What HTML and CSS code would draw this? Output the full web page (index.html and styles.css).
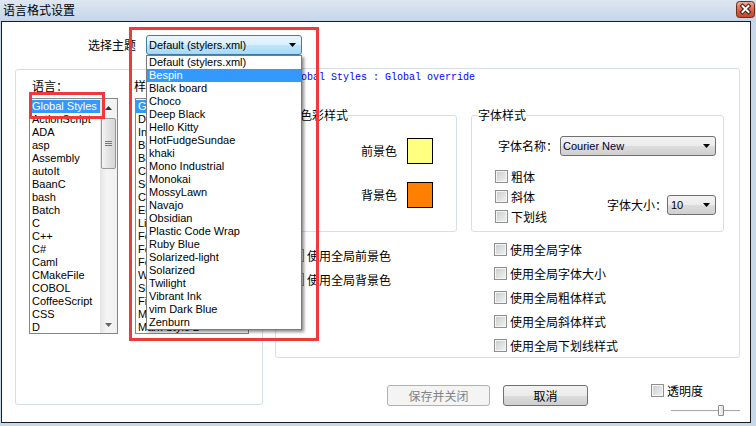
FILE: index.html
```html
<!DOCTYPE html>
<html lang="zh-CN">
<head>
    <meta charset="UTF-8">
    <title>语言格式设置</title>
    <link rel="stylesheet" href="styles.css">
</head>
<body>
    <div class="titlebar">
        <span class="title zh">语言格式设置</span>
        <svg class="close" width="19" height="17" viewBox="0 0 19 17">
            <defs>
                <linearGradient id="cg" x1="0" y1="0" x2="0" y2="1">
                    <stop offset="0" stop-color="#eab19f"/>
                    <stop offset="0.5" stop-color="#d7694c"/>
                    <stop offset="1" stop-color="#c2452a"/>
                </linearGradient>
            </defs>
            <rect x="0.5" y="0.5" width="18" height="16" rx="3" fill="url(#cg)" stroke="#6e2a1a"/>
            <path d="M6.5 5 L12.5 11 M12.5 5 L6.5 11" stroke="#3d1710" stroke-width="4" stroke-linecap="square"/>
            <path d="M6.5 5 L12.5 11 M12.5 5 L6.5 11" stroke="#fff" stroke-width="2" stroke-linecap="square"/>
        </svg>
    </div>

    <div class="window">
        <div class="theme-row">
            <span class="theme-label zh">选择主题</span>
            <div class="combo combo-focus theme-combo">
                <span>Default (stylers.xml)</span>
                <svg class="arrow" width="7" height="4"><path d="M0 0 L7 0 L3.5 4Z" fill="#000"/></svg>
                <ul class="dropdown">
                    <li>Default (stylers.xml)</li>
                    <li class="sel">Bespin</li>
                    <li>Black board</li>
                    <li>Choco</li>
                    <li>Deep Black</li>
                    <li>Hello Kitty</li>
                    <li>HotFudgeSundae</li>
                    <li>khaki</li>
                    <li>Mono Industrial</li>
                    <li>Monokai</li>
                    <li>MossyLawn</li>
                    <li>Navajo</li>
                    <li>Obsidian</li>
                    <li>Plastic Code Wrap</li>
                    <li>Ruby Blue</li>
                    <li>Solarized-light</li>
                    <li>Solarized</li>
                    <li>Twilight</li>
                    <li>Vibrant Ink</li>
                    <li>vim Dark Blue</li>
                    <li>Zenburn</li>
                </ul>
            </div>
        </div>

        <div class="main">
            <div class="group left-group">
                <div class="col">
                    <div class="lbl zh">语言：</div>
                    <div class="listbox lang-list">
                        <ul class="items">
                            <li class="sel">Global Styles</li>
                            <li>ActionScript</li>
                            <li>ADA</li>
                            <li>asp</li>
                            <li>Assembly</li>
                            <li>autoIt</li>
                            <li>BaanC</li>
                            <li>bash</li>
                            <li>Batch</li>
                            <li>C</li>
                            <li>C++</li>
                            <li>C#</li>
                            <li>Caml</li>
                            <li>CMakeFile</li>
                            <li>COBOL</li>
                            <li>CoffeeScript</li>
                            <li>CSS</li>
                            <li>D</li>
                        </ul>
                        <div class="vscroll">
                            <div class="sb-btn"><svg width="7" height="4"><path d="M0 4 L3.5 0 L7 4Z" fill="#333"/></svg></div>
                            <div class="sb-thumb">
                                <svg width="7" height="7"><path d="M0 1.5 H7 M0 3.5 H7 M0 5.5 H7" stroke="#777" stroke-width="1"/></svg>
                            </div>
                            <div class="sb-track"></div>
                            <div class="sb-btn"><svg width="7" height="4"><path d="M0 0 L7 0 L3.5 4Z" fill="#666"/></svg></div>
                        </div>
                    </div>
                </div>
                <div class="col">
                    <div class="lbl lbl-style zh">样式：</div>
                    <div class="listbox style-list">
                        <ul class="items">
                            <li class="sel">Global override</li>
                            <li>Default Style</li>
                            <li>Indent guideline style</li>
                            <li>Brace highlight style</li>
                            <li>Bad brace colour</li>
                            <li>Current line background colour</li>
                            <li>Selected text colour</li>
                            <li>Caret colour</li>
                            <li>Edge colour</li>
                            <li>Line number margin</li>
                            <li>Fold</li>
                            <li>Fold active</li>
                            <li>Fold margin</li>
                            <li>White space symbol</li>
                            <li>Smart HighLighting</li>
                            <li>Find Mark Style</li>
                            <li>Mark Style 1</li>
                            <li>Mark Style 2</li>
                        </ul>
                    </div>
                </div>
            </div>

            <div class="right-col">
                <div class="group right-group">
                    <div class="desc">Global Styles : Global override</div>

                    <div class="subgroups">
                        <fieldset class="colour-group">
                            <legend class="zh">色彩样式</legend>
                            <div class="colour-inner">
                                <span class="zh">前景色</span>
                                <span class="swatch fg"></span>
                                <span class="zh">背景色</span>
                                <span class="swatch bg"></span>
                            </div>
                        </fieldset>
                        <fieldset class="font-group">
                            <legend class="zh">字体样式</legend>
                            <div class="font-inner">
                                <div class="name-row">
                                    <span class="zh font-lbl">字体名称：</span>
                                    <div class="combo name-combo">
                                        <span>Courier New</span>
                                        <svg class="arrow" width="7" height="4"><path d="M0 0 L7 0 L3.5 4Z" fill="#000"/></svg>
                                    </div>
                                </div>
                                <div class="style-row">
                                    <div class="font-chks">
                                        <label class="chk"><span class="box"></span><span class="zh">粗体</span></label>
                                        <label class="chk"><span class="box"></span><span class="zh">斜体</span></label>
                                        <label class="chk"><span class="box"></span><span class="zh">下划线</span></label>
                                    </div>
                                    <div class="size">
                                        <span class="zh font-lbl">字体大小：</span>
                                        <div class="combo size-combo">
                                            <span>10</span>
                                            <svg class="arrow" width="7" height="4"><path d="M0 0 L7 0 L3.5 4Z" fill="#000"/></svg>
                                        </div>
                                    </div>
                                </div>
                            </div>
                        </fieldset>
                    </div>

                    <div class="globals">
                        <div class="gcol gcol-left">
                            <label class="chk"><span class="box"></span><span class="zh">使用全局前景色</span></label>
                            <label class="chk"><span class="box"></span><span class="zh">使用全局背景色</span></label>
                        </div>
                        <div class="gcol">
                            <label class="chk"><span class="box"></span><span class="zh">使用全局字体</span></label>
                            <label class="chk"><span class="box"></span><span class="zh">使用全局字体大小</span></label>
                            <label class="chk"><span class="box"></span><span class="zh">使用全局粗体样式</span></label>
                            <label class="chk"><span class="box"></span><span class="zh">使用全局斜体样式</span></label>
                            <label class="chk"><span class="box"></span><span class="zh">使用全局下划线样式</span></label>
                        </div>
                    </div>
                </div>

                <div class="bottom">
                    <button class="btn btn-save zh" disabled>保存并关闭</button>
                    <button class="btn btn-cancel zh">取消</button>
                    <div class="trans">
                        <label class="chk"><span class="box"></span><span class="zh">透明度</span></label>
                        <div class="slider"><span class="thumb"></span></div>
                    </div>
                </div>
            </div>
        </div>

        <!-- annotation boxes drawn over the dialog -->
        <div class="mark mark-theme"></div>
        <div class="mark mark-lang"></div>
    </div>
</body>
</html>
```

FILE: styles.css
```css
* { box-sizing: border-box; }
body { margin: 0; width: 756px; height: 426px; overflow: hidden; background: #c8d7ea; font-family: "Liberation Sans", "Noto Sans CJK SC", sans-serif; font-size: 11px; color: #000; }
ul { list-style: none; margin: 0; padding: 0; }
.zh { font-family: "Noto Sans CJK SC", sans-serif; font-size: 12px; line-height: 14px; white-space: nowrap; }

/* title bar */
.titlebar { height: 21px; display: flex; align-items: center; justify-content: space-between; padding: 0 1px 0 3px; background: linear-gradient(#dee7f2, #c5d5e9); }
.title { margin-top: -1px; }
.close { display: block; margin-top: -2px; }

.window { position: relative; width: 750px; height: 402px; margin-left: 1px; border: 1px solid #1c1c1c; background: #fff; }

/* theme selector */
.theme-row { display: flex; align-items: center; gap: 10px; padding: 13px 0 0 86px; }
.combo { position: relative; display: flex; align-items: center; justify-content: space-between; height: 20px; padding: 0 5px 0 2px; border: 1px solid #707070; border-radius: 3px; background: linear-gradient(#f3f3f3 0%, #ebebeb 50%, #dddddd 50%, #cfcfcf 100%); line-height: 13px; }
.combo-focus { border-color: #3c7fb1; background: linear-gradient(#eaf6fd 0%, #d9f0fc 50%, #bee6fd 50%, #a7d9f5 100%); }
.arrow { display: block; }
.theme-combo { width: 156px; }
.dropdown { position: absolute; top: 19px; left: -1px; width: 156px; border: 1px solid #7a7a7a; background: #fff; box-shadow: 2px 2px 3px rgba(0, 0, 0, 0.45); z-index: 2; }
.dropdown li { height: 13px; line-height: 13px; padding-left: 2px; white-space: nowrap; }
.sel { background: #3399ff; color: #fff; }

/* main area */
.main { display: flex; align-items: flex-start; gap: 12px; margin-top: 13px; padding-left: 13px; }
.group { border: 1px solid #d5dfe5; border-radius: 3px; }
.left-group { display: flex; gap: 17px; width: 248px; height: 336px; margin-top: 1px; padding: 9px 0 0 13px; }
.lbl { margin-bottom: 5px; padding-left: 3px; }
.lbl-style { padding-left: 0; margin-left: -1px; }
.listbox { display: flex; height: 236px; border: 1px solid #828790; background: #fff; overflow: hidden; }
.lang-list { width: 89px; }
.style-list { width: 114px; }
.items { flex: 1; padding-top: 1px; overflow: hidden; }
.items li { height: 13px; line-height: 13px; padding-left: 2px; white-space: nowrap; }

.vscroll { display: flex; flex-direction: column; width: 17px; background: linear-gradient(to right, #e4e4e4, #f5f5f5 40%, #f0f0f0); }
.sb-btn { display: flex; align-items: center; justify-content: center; height: 17px; }
.sb-thumb { display: flex; align-items: center; justify-content: center; height: 51px; margin: 2px 1px 0; border: 1px solid #999; border-radius: 2px; background: linear-gradient(to right, #f4f4f4, #e3e3e3 50%, #d6d6d6); }
.sb-track { flex: 1; }

/* right side */
.right-col { width: 465px; }
.right-group { height: 290px; padding: 3px 0 0 13px; }
.desc { font-family: "Liberation Mono", monospace; font-size: 10px; line-height: 12px; color: #0000ff; white-space: pre; }
.subgroups { display: flex; gap: 14px; margin: 24px 0 0 4px; }
fieldset { margin: 0; padding: 0; min-width: 0; height: 124px; border: 1px solid #d5dfe5; border-radius: 3px; }
legend { margin-left: 6px; padding: 0; line-height: 12px; }
.colour-group { width: 164px; }
.font-group { width: 253px; }
.colour-inner { display: grid; grid-template-columns: 36px 26px; column-gap: 10px; row-gap: 18px; align-items: center; padding: 16px 0 0 67px; }
.swatch { display: block; width: 26px; height: 26px; border: 1px solid #000; }
.fg { background: #ffff80; }
.bg { background: #ff8000; }

.font-inner { padding: 14px 7px 0 0; }
.name-row { display: flex; justify-content: flex-end; align-items: center; gap: 2px; }
.font-lbl { width: 60px; }
.name-combo { width: 156px; color: #000033; }
.style-row { display: flex; justify-content: space-between; margin-top: 14px; padding-left: 23px; }
.font-chks .chk { margin-bottom: 7px; }
.size { display: flex; align-items: center; margin-top: 10px; }
.size-combo { width: 49px; padding-left: 3px; }

.chk { display: flex; align-items: center; gap: 3px; height: 13px; }
.box { display: block; width: 13px; height: 13px; border: 1px solid #8e8f8f; box-shadow: inset 0 0 0 1px #f4f4f4; background: linear-gradient(135deg, #c8cacd, #f4f4f4); }

.globals { display: grid; grid-template-columns: 203px auto; margin: 11px 0 0 2px; }
.gcol-left { padding-top: 6px; }
.gcol .chk { margin-bottom: 11px; }

/* bottom buttons */
.bottom { display: flex; align-items: flex-start; margin-top: 27px; padding-left: 112px; }
.btn { height: 21px; padding: 0; border: 1px solid #707070; border-radius: 3px; background: linear-gradient(#f2f2f2 0%, #ebebeb 50%, #dddddd 50%, #cfcfcf 100%); color: #000; }
.btn-save { width: 103px; border-color: #adb2b5; background: #f4f4f4; color: #838383; }
.btn-cancel { width: 85px; margin-left: 13px; }
.trans { margin: -1px 0 0 63px; }
.slider { width: 69px; height: 11px; margin: 8px 0 0 20px; padding-left: 47px; background: linear-gradient(transparent 5px, #a8a8a8 5px, #a8a8a8 6px, #f8f8f8 6px, #f8f8f8 7px, transparent 7px); }
.thumb { display: block; width: 6px; height: 11px; border: 1px solid #8a8a8a; border-radius: 1px; background: linear-gradient(to right, #fdfdfd, #dedede); }

/* red annotation boxes */
.mark { position: absolute; border: 3px solid #f03a3a; z-index: 3; }
.mark-theme { left: 127px; top: 5px; width: 190px; height: 314px; }
.mark-lang { left: 27px; top: 70px; width: 76px; height: 27px; }
```
